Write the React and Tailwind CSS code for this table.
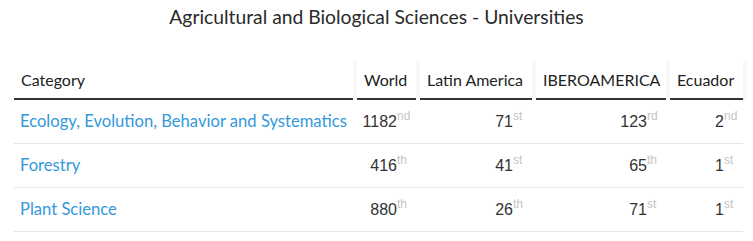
const cols = 'grid grid-cols-[339px_59px_112px_130px_73px] gap-x-[4px]'

const rows = [
  { name: 'Ecology, Evolution, Behavior and Systematics', ranks: [['1182', 'nd'], ['71', 'st'], ['123', 'rd'], ['2', 'nd']] },
  { name: 'Forestry', ranks: [['416', 'th'], ['41', 'st'], ['65', 'th'], ['1', 'st']] },
  { name: 'Plant Science', ranks: [['880', 'th'], ['26', 'th'], ['71', 'st'], ['1', 'st']] },
]

const headers = ['Category', 'World', 'Latin America', 'IBEROAMERICA', 'Ecuador']

function Rank({ value, suffix }) {
  return (
    <div className="flex items-center justify-end pr-[5px] font-['Liberation_Sans',Arial,sans-serif] text-[16px] text-[#333]">
      <span>{value}</span>
      <span className="w-[14px] self-start mt-[10px] text-[12px] leading-none text-[#c4c4c4]">{suffix}</span>
    </div>
  )
}

export default function App() {
  return (
    <div className="w-[753px] h-[241px] bg-white font-['Lato','Open_Sans',sans-serif] overflow-hidden">
      {/* Title */}
      <h2 className="pt-[5px] text-center text-[19.3px] leading-[24px] text-[#2a2a2a]">
        Agricultural and Biological Sciences - Universities
      </h2>

      <div className="mt-[32px] ml-[14px] w-[733px]">
        {/* Header */}
        <div className={`${cols} bg-[#f7f7f7] pr-[4px] w-[733px]`}>
          {headers.map((h) => (
            <div key={h} className="h-[39px] bg-white border-b-2 border-[#333] flex items-center pl-[7px] text-[16px] text-[#222] whitespace-nowrap">
              {h}
            </div>
          ))}
        </div>

        {/* Body */}
        {rows.map((r) => (
          <div key={r.name} className={`${cols} h-[44px] border-b border-[#e6e6e6] w-[729px]`}>
            <div className="flex items-center pl-[6px] text-[16.6px] text-[#3498db] whitespace-nowrap">
              {r.name}
            </div>
            {r.ranks.map(([v, s], i) => (
              <Rank key={i} value={v} suffix={s} />
            ))}
          </div>
        ))}
      </div>
    </div>
  )
}
